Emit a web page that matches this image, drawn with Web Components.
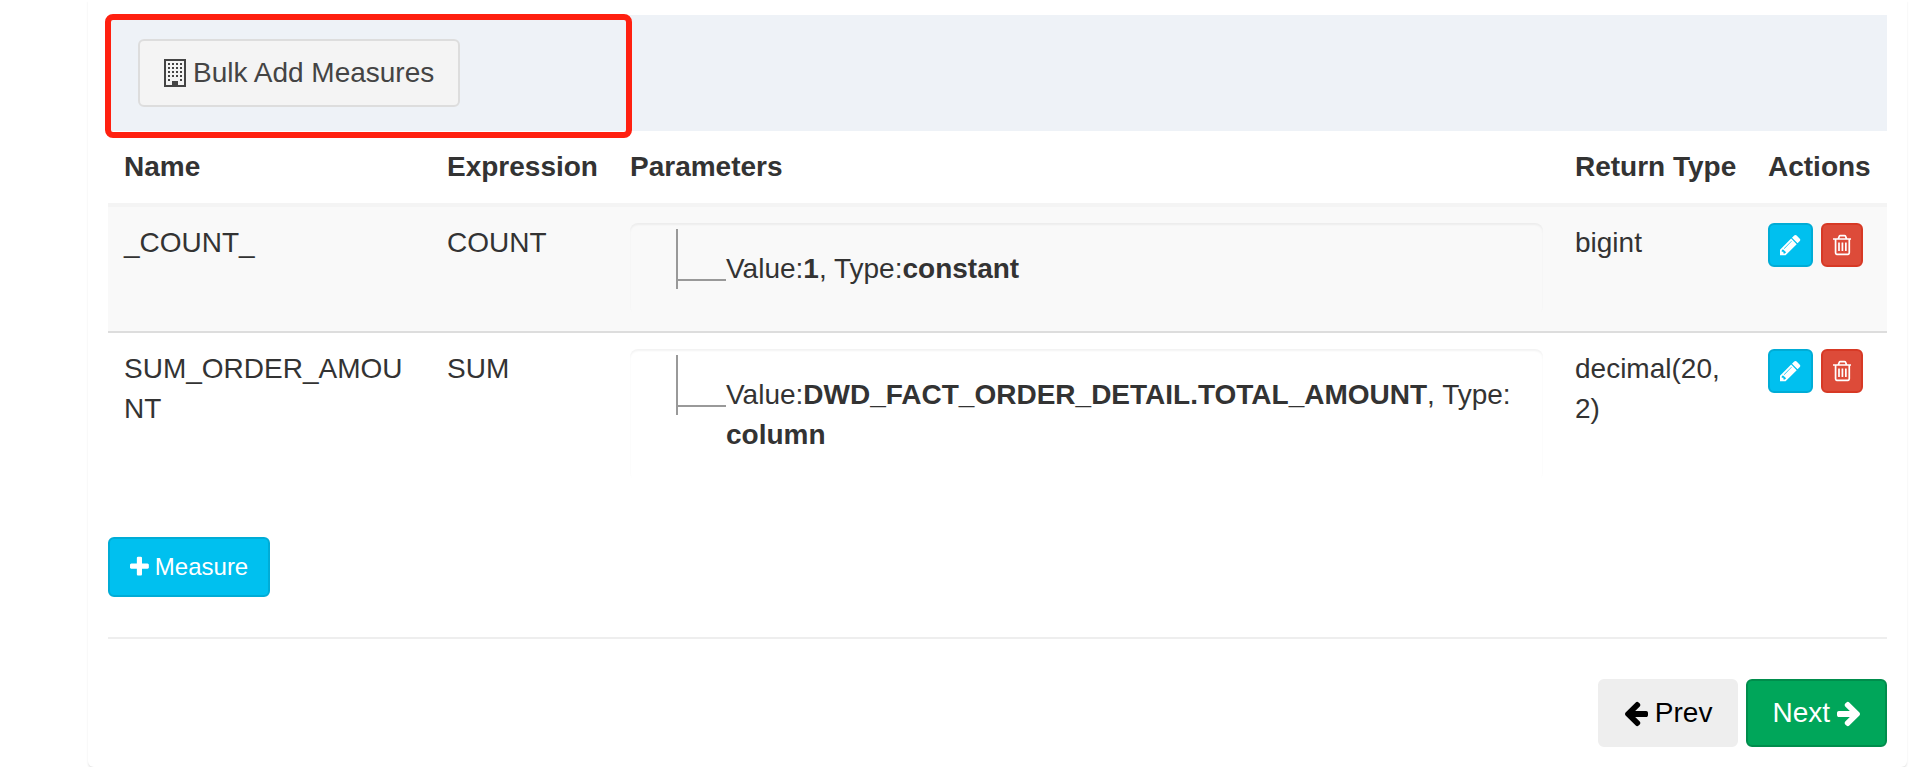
<!DOCTYPE html>
<html lang="en">
<head>
<meta charset="utf-8">
<meta name="viewport" content="width=device-width, initial-scale=1">
<title>Measures</title>
<style>
	body {
		margin: 0;
		background: #fff;
		color: #333;
		font: 28px/40px "Liberation Sans", Arial, sans-serif;
	}
</style>
</head>
<body>
<wizard-card>
	<tool-bar slot="toolbar">
		<ui-button><ui-icon name="building"></ui-icon>Bulk Add Measures</ui-button>
	</tool-bar>

	<measure-table></measure-table>
	<ui-button variant="info" size="sm"><ui-icon name="plus"></ui-icon>Measure</ui-button>

	<ui-button slot="footer" variant="plain"><ui-icon name="arrow-left"></ui-icon>Prev</ui-button>
	<ui-button slot="footer" variant="success">Next<ui-icon name="arrow-right"></ui-icon></ui-button>
</wizard-card>

<script>
/**
 * Cube designer, "Measures" step.
 *
 * - <wizard-card>    the step's panel: toolbar, content, footer buttons
 * - <tool-bar>       tinted strip with a highlighted area around its content
 * - <measure-table>  table of the cube's measures
 * - <param-tree>     one branch of a measure's parameters
 * - <ui-button>, <ui-icon>
 */

// ─── Icons ───────────────────────────────────────────────────────────────────

const ICONS = {
	building: {
		box: "0 0 22 28",
		path: "M0 0h22v28H0zM2 2v24h6v-4h6v4h6V2zM4 4h2v2H4zM8 4h2v2H8zM12 4h2v2h-2zM16 4h2v2h-2zM4 8h2v2H4zM8 8h2v2H8zM12 8h2v2h-2zM16 8h2v2h-2zM4 12h2v2H4zM8 12h2v2H8zM12 12h2v2h-2zM16 12h2v2h-2zM4 16h2v2H4zM8 16h2v2H8zM12 16h2v2h-2zM16 16h2v2h-2zM4 20h2v2H4zM16 20h2v2h-2z",
	},
	plus: {
		box: "192 0 1408 1792",
		path: "M1600 736v192q0 40-28 68t-68 28h-416v416q0 40-28 68t-68 28h-192q-40 0-68-28t-28-68v-416h-416q-40 0-68-28t-28-68v-192q0-40 28-68t68-28h416v-416q0-40 28-68t68-28h192q40 0 68 28t28 68v416h416q40 0 68 28t28 68z",
	},
	pencil: {
		box: "128 0 1536 1792",
		path: "M491 1536l91-91-235-235-91 91v107h128v128h107zm523-928q0-22-22-22-10 0-17 7l-542 542q-7 7-7 17 0 22 22 22 10 0 17-7l542-542q7-7 7-17zm-54-192l416 416-832 832h-416v-416zm683 96q0 53-37 90l-166 166-416-416 166-165q36-38 90-38 53 0 91 38l235 234q37 39 37 91z",
	},
	trash: {
		box: "192 0 1408 1792",
		path: "M704 736v576q0 14-9 23t-23 9h-64q-14 0-23-9t-9-23v-576q0-14 9-23t23-9h64q14 0 23 9t9 23zm256 0v576q0 14-9 23t-23 9h-64q-14 0-23-9t-9-23v-576q0-14 9-23t23-9h64q14 0 23 9t9 23zm256 0v576q0 14-9 23t-23 9h-64q-14 0-23-9t-9-23v-576q0-14 9-23t23-9h64q14 0 23 9t9 23zm128 724v-948h-896v948q0 22 7 40.5t14.5 27 10.5 8.5h832q3 0 10.5-8.5t14.5-27 7-40.5zm-672-1076h448l-48-117q-7-9-17-11h-317q-10 2-17 11zm928 32v64q0 14-9 23t-23 9h-96v948q0 83-47 143.5t-113 60.5h-832q-66 0-113-58.5t-47-141.5v-952h-96q-14 0-23-9t-9-23v-64q0-14 9-23t23-9h309l70-167q15-37 54-63t79-26h320q40 0 79 26t54 63l70 167h309q14 0 23 9t9 23z",
	},
	"arrow-left": {
		box: "128 0 1536 1792",
		path: "M1664 896v128q0 53-32.5 90.5t-84.5 37.5h-704l293 294q38 36 38 90t-38 90l-75 76q-37 37-90 37-52 0-91-37l-651-652q-37-37-37-90 0-52 37-91l651-650q38-38 91-38 52 0 90 38l75 74q38 38 38 91t-38 91l-293 293h704q52 0 84.5 37.5t32.5 90.5z",
	},
	"arrow-right": {
		box: "128 0 1536 1792",
		path: "M1600 960q0 54-37 91l-651 651q-39 37-91 37-51 0-90-37l-75-75q-38-38-38-91t38-91l293-293h-704q-52 0-84.5-37.5t-32.5-90.5v-128q0-53 32.5-90.5t84.5-37.5h704l-293-294q-38-36-38-90t38-90l75-75q38-38 90-38 53 0 91 38l651 651q37 35 37 90z",
	},
};

class UiIcon extends HTMLElement {
	connectedCallback() {
		if (this.shadowRoot) return;
		const icon = ICONS[this.getAttribute("name")];

		this.attachShadow({ mode: "open" }).innerHTML = `
			<style>
				:host { display: inline-flex; }
				svg { display: block; height: 1em; width: auto; fill: currentColor; }
			</style>
			<svg viewBox="${icon.box}" aria-hidden="true"><path fill-rule="evenodd" d="${icon.path}"/></svg>
		`;
	}
}

// ─── Button ──────────────────────────────────────────────────────────────────

class UiButton extends HTMLElement {
	connectedCallback() {
		if (this.shadowRoot) return;

		this.attachShadow({ mode: "open" }).innerHTML = `
			<style>
				:host {
					display: inline-flex;
					--bg: #f4f4f4;
					--line: #ddd;
					--ink: #444;
				}
				:host([variant="info"]) { --bg: #00c0ef; --line: #00acd6; --ink: #fff; }
				:host([variant="danger"]) { --bg: #dd4b39; --line: #d73925; --ink: #fff; }
				:host([variant="success"]) { --bg: #00a65a; --line: #008d4c; --ink: #fff; }
				:host([variant="plain"]) { --bg: #eee; --line: #eee; --ink: #000; }
				button {
					display: inline-flex;
					align-items: center;
					gap: 7px;
					margin: 0;
					padding: 12px 24px;
					border: 2px solid var(--line);
					border-radius: 6px;
					background: var(--bg);
					color: var(--ink);
					font: inherit;
					white-space: nowrap;
					cursor: pointer;
				}
				:host([size="sm"]) button,
				:host([size="xs"]) button {
					gap: 6px;
					font-size: 24px;
					line-height: 36px;
				}
				:host([size="sm"]) button { padding: 10px 20px; }
				:host([size="xs"]) button { padding: 2px 10px; min-height: 44px; }
			</style>
			<button type="button"><slot></slot></button>
		`;

		// The host's label belongs on the real control
		const label = this.getAttribute("label");
		if (label) this.shadowRoot.querySelector("button").setAttribute("aria-label", label);
	}
}

// ─── Layout ──────────────────────────────────────────────────────────────────

class WizardCard extends HTMLElement {
	constructor() {
		super();
		this.attachShadow({ mode: "open" }).innerHTML = `
			<style>
				:host {
					display: block;
					margin: 0 9px 0 88px;
					padding: 15px 20px 20px;
					border-radius: 0 0 6px 6px;
					background: #fff;
					box-shadow: 0 2px 2px rgba(0, 0, 0, 0.1);
				}
				hr {
					margin: 40px 0;
					border: 0;
					border-top: 2px solid #eee;
				}
				main {
					display: flex;
					flex-direction: column;
					align-items: flex-start;
					gap: 40px;
				}
				footer {
					display: flex;
					justify-content: flex-end;
					gap: 8px;
				}
			</style>
			<slot name="toolbar"></slot>
			<main><slot></slot></main>
			<hr>
			<footer><slot name="footer"></slot></footer>
		`;
	}
}

class ToolBar extends HTMLElement {
	constructor() {
		super();
		this.attachShadow({ mode: "open" }).innerHTML = `
			<style>
				:host {
					display: flex;
					position: relative;
					padding: 24px 30px;
					background: #eef2f7;
				}
				/* Frame drawn over the left part of the bar, slightly larger than it */
				.highlight {
					position: absolute;
					inset: -1px auto -7px -3px;
					width: 527px;
					box-sizing: border-box;
					border: 6px solid #ff2010;
					border-radius: 8px;
					pointer-events: none;
				}
			</style>
			<slot></slot>
			<div class="highlight"></div>
		`;
	}
}

// ─── Measures ────────────────────────────────────────────────────────────────

const MEASURES = [
	{
		name: "_COUNT_",
		expression: "COUNT",
		value: "1",
		type: "constant",
		returnType: "bigint",
	},
	{
		name: "SUM_ORDER_AMOUNT",
		expression: "SUM",
		value: "DWD_FACT_ORDER_DETAIL.TOTAL_AMOUNT",
		type: "column",
		returnType: "decimal(20, 2)",
	},
];

class ParamTree extends HTMLElement {
	constructor() {
		super();
		this.attachShadow({ mode: "open" }).innerHTML = `
			<style>
				:host {
					display: flex;
					padding: 6px 16px 26px 46px;
					border-radius: 8px;
					box-shadow: inset 0 2px 2px rgba(0, 0, 0, 0.05);
				}
				/* Trunk on the left, twig leading to the text */
				.branch {
					flex: none;
					width: 48px;
					height: 60px;
					border-left: 2px solid #999;
				}
				.branch::before {
					content: "";
					display: block;
					height: 50px;
					border-bottom: 2px solid #999;
				}
				.text { padding-top: 20px; }
			</style>
			<div class="branch"></div>
			<div class="text"><slot></slot></div>
		`;
	}
}

class MeasureTable extends HTMLElement {
	constructor() {
		super();
		const rows = MEASURES.map((m) => `
			<tr>
				<td>${m.name}</td>
				<td>${m.expression}</td>
				<td><param-tree><span>Value:<b>${m.value}</b>, Type:<wbr><b>${m.type}</b></span></param-tree></td>
				<td>${m.returnType}</td>
				<td>
					<div class="actions">
						<ui-button variant="info" size="xs" label="Edit"><ui-icon name="pencil"></ui-icon></ui-button>
						<ui-button variant="danger" size="xs" label="Delete"><ui-icon name="trash"></ui-icon></ui-button>
					</div>
				</td>
			</tr>`).join("");

		this.attachShadow({ mode: "open" }).innerHTML = `
			<style>
				:host { display: block; width: 100%; }
				table {
					width: 100%;
					table-layout: fixed;
					border-spacing: 0;
				}
				.name { width: 323px; }
				.expression { width: 183px; }
				.return { width: 193px; }
				.action { width: 135px; }
				th, td {
					padding: 16px;
					text-align: left;
					vertical-align: top;
					overflow-wrap: break-word;
				}
				th {
					border-bottom: 4px solid #f4f4f4;
					white-space: nowrap;
				}
				tbody tr:nth-child(odd) { background: #f9f9f9; }
				tbody tr + tr td { border-top: 2px solid #ddd; }
				.actions { display: flex; gap: 8px; }
			</style>
			<table>
				<colgroup>
					<col class="name"><col class="expression"><col><col class="return"><col class="action">
				</colgroup>
				<thead>
					<tr>
						<th scope="col">Name</th>
						<th scope="col">Expression</th>
						<th scope="col">Parameters</th>
						<th scope="col">Return Type</th>
						<th scope="col">Actions</th>
					</tr>
				</thead>
				<tbody>${rows}</tbody>
			</table>
		`;
	}
}

customElements.define("ui-icon", UiIcon);
customElements.define("ui-button", UiButton);
customElements.define("wizard-card", WizardCard);
customElements.define("tool-bar", ToolBar);
customElements.define("param-tree", ParamTree);
customElements.define("measure-table", MeasureTable);
</script>
</body>
</html>
